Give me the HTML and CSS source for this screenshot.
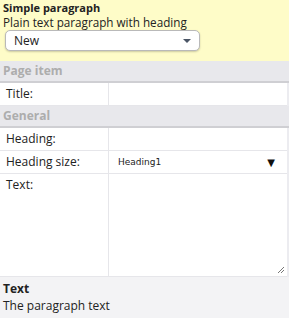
FILE: index.html
```html
<!DOCTYPE html>
<html lang="en">
<head>
    <meta charset="UTF-8">
    <title>Simple paragraph</title>
    <link rel="stylesheet" href="styles.css">
</head>
<body>

    <div class="intro">
        <div class="intro-title">Simple paragraph</div>
        <div class="intro-desc">Plain text paragraph with heading</div>
        <div class="picker">
            <span>New</span>
            <span class="picker-arrow"></span>
        </div>
    </div>

    <div class="props">
        <div class="section">Page item</div>
        <div class="row">
            <div class="label">Title:</div>
            <div class="value"></div>
        </div>

        <div class="section">General</div>
        <div class="row">
            <div class="label">Heading:</div>
            <div class="value"></div>
        </div>
        <div class="row">
            <div class="label">Heading size:</div>
            <div class="value value-select">
                <span>Heading1</span>
                <span class="select-arrow">&#9660;</span>
            </div>
        </div>
        <div class="row row-tall">
            <div class="label">Text:</div>
            <div class="value">
                <svg class="grip" width="7" height="7" viewBox="0 0 7 7">
                    <path d="M6 0 L0 6 M6 3 L3 6" stroke="#777" stroke-width="1"/>
                </svg>
            </div>
        </div>
    </div>

    <div class="help">
        <div class="help-title">Text</div>
        <div class="help-desc">The paragraph text</div>
    </div>

</body>
</html>
```

FILE: styles.css
```css
body {
    font-family: "Open Sans", sans-serif;
    margin: 0;
    padding: 0;
    color: #222;
    background-color: #f3f3f5;
    width: 289px;
}
.intro {
    background-color: #fefcc8;
    padding: 1px 3px 0 3px;
    height: 60px;
}
.intro-title {
    font-size: 11px;
    font-weight: bold;
    line-height: 13px;
}
.intro-desc {
    font-size: 11.7px;
    line-height: 16px;
}
.picker {
    display: flex;
    align-items: center;
    justify-content: space-between;
    width: 177px;
    height: 19px;
    margin: 0 0 0 2px;
    padding: 0 8px 0 8px;
    background-color: white;
    border: 1px solid #b9b9b9;
    border-radius: 5px;
    box-shadow: 0 1px 2px rgba(0, 0, 0, 0.2);
    font-size: 12px;
}
.picker-arrow {
    width: 0;
    height: 0;
    border-left: 4px solid transparent;
    border-right: 4px solid transparent;
    border-top: 4px solid #4a5565;
}
.props {
    background-color: #ececf0;
    padding-right: 2px;
}
.section {
    height: 20px;
    line-height: 20px;
    padding-left: 3px;
    background-color: #e8e8ec;
    border-bottom: 2px solid #cfcfd3;
    color: #adadad;
    font-size: 12px;
    font-weight: bold;
    margin-right: -2px;
}
.row {
    display: flex;
    height: 22px;
    background-color: white;
    border-bottom: 1px solid #e6e6ea;
}
.row-tall {
    height: 102px;
}
.label {
    width: 102px;
    padding: 3px 0 0 6px;
    font-size: 12px;
    line-height: 16px;
    color: #222;
    border-right: 1px solid #e6e6ea;
}
.value {
    flex: 1;
    position: relative;
}
.value-select {
    display: flex;
    align-items: center;
    justify-content: space-between;
    padding: 0 12px 0 9px;
    font-family: "DejaVu Sans", sans-serif;
    font-size: 9px;
}
.select-arrow {
    font-size: 10px;
    color: #111;
}
.grip {
    position: absolute;
    right: 2px;
    bottom: 2px;
}
.help {
    padding: 3px 3px;
}
.help-title {
    font-size: 12px;
    font-weight: bold;
    line-height: 17px;
}
.help-desc {
    font-size: 12px;
    line-height: 17px;
}
```
